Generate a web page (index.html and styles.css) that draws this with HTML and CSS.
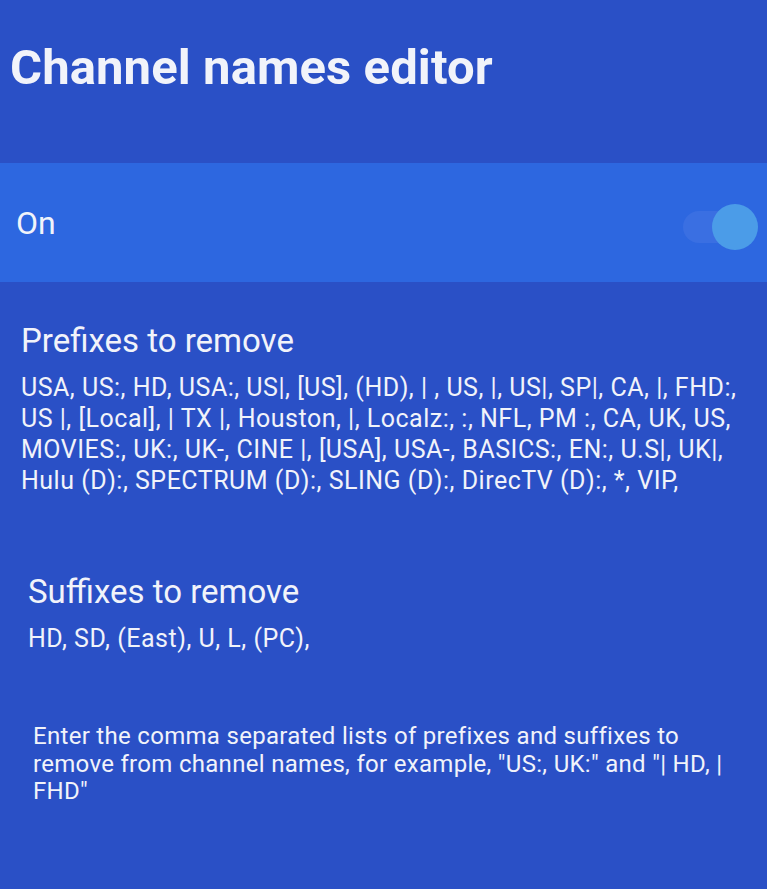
FILE: index.html
```html
<!DOCTYPE html>
<html lang="en">
<head>
<meta charset="utf-8">
<title>Channel names editor</title>
<link rel="stylesheet" href="styles.css">
</head>
<body>
<div class="screen">
  <h1 class="title">Channel names editor</h1>

  <div class="row row-focused">
    <span class="row-label">On</span>
    <span class="switch" aria-checked="true" role="switch">
      <span class="switch-track"></span>
      <span class="switch-thumb"></span>
    </span>
  </div>

  <section class="pref pref-prefixes">
    <h2 class="pref-title">Prefixes to remove</h2>
    <p class="pref-value">
      <span class="line">USA, US:, HD, USA:, US|, [US], (HD), | , US, |, US|, SP|, CA, |, FHD:,</span>
      <span class="line">US |, [Local], | TX |, Houston, |, Localz:, :, NFL, PM :, CA, UK, US,</span>
      <span class="line">MOVIES:, UK:, UK-, CINE |, [USA], USA-, BASICS:, EN:, U.S|, UK|,</span>
      <span class="line">Hulu (D):, SPECTRUM (D):, SLING (D):, DirecTV (D):, *, VIP,</span>
    </p>
  </section>

  <section class="pref pref-suffixes">
    <h2 class="pref-title">Suffixes to remove</h2>
    <p class="pref-value">
      <span class="line">HD, SD, (East), U, L, (PC),</span>
    </p>
  </section>

  <p class="hint">Enter the comma separated lists of prefixes and suffixes to remove from channel names, for example, "US:, UK:" and "| HD, | FHD"</p>
</div>
</body>
</html>
```

FILE: styles.css
```css
html, body {
  margin: 0;
  padding: 0;
  height: 100%;
}

body {
  background: #2a50c6;
  color: #f1f3fa;
  font-family: Roboto, "Noto Sans", "Liberation Sans", sans-serif;
  overflow: hidden;
}

.screen {
  display: flex;
  flex-direction: column;
  min-height: 889px;
  padding-top: 38px;
  box-sizing: border-box;
}

/* page heading */
.title {
  margin: 0 0 0 10px;
  font-size: 49px;
  font-weight: 700;
  line-height: 60px;
  letter-spacing: 0.1px;
}

/* focused toggle row */
.row {
  display: flex;
  align-items: center;
  justify-content: space-between;
  margin-top: 65px;
  height: 119px;
  padding: 0 9px 0 16px;
}

.row-focused {
  background: #2d67e0;
}

.row-label {
  font-size: 32px;
  line-height: 1;
}

.switch {
  position: relative;
  display: block;
  width: 75px;
  height: 46px;
  margin-top: 8px;
}

.switch-track {
  position: absolute;
  left: 0;
  top: 7px;
  width: 62px;
  height: 32px;
  border-radius: 16px;
  background: #3a6fe2;
}

.switch-thumb {
  position: absolute;
  right: 0;
  top: 0;
  width: 46px;
  height: 46px;
  border-radius: 50%;
  background: #4b9ce8;
}

/* preference blocks */
.pref-prefixes {
  margin-top: 39px;
  padding: 0 21px;
}

.pref-suffixes {
  margin-top: 76px;
  padding: 0 28px;
}

.pref-title {
  margin: 0;
  font-size: 33px;
  font-weight: 400;
  line-height: 40px;
}

.pref-value {
  margin: 11px 0 0;
  font-size: 25px;
  line-height: 31px;
  letter-spacing: 0.5px;
}

.line {
  display: block;
  white-space: nowrap;
}

/* explanatory footnote */
.hint {
  margin: 69px 0 0;
  padding: 0 33px;
  max-width: 700px;
  font-size: 24px;
  line-height: 27.5px;
  letter-spacing: 0.3px;
}
```
